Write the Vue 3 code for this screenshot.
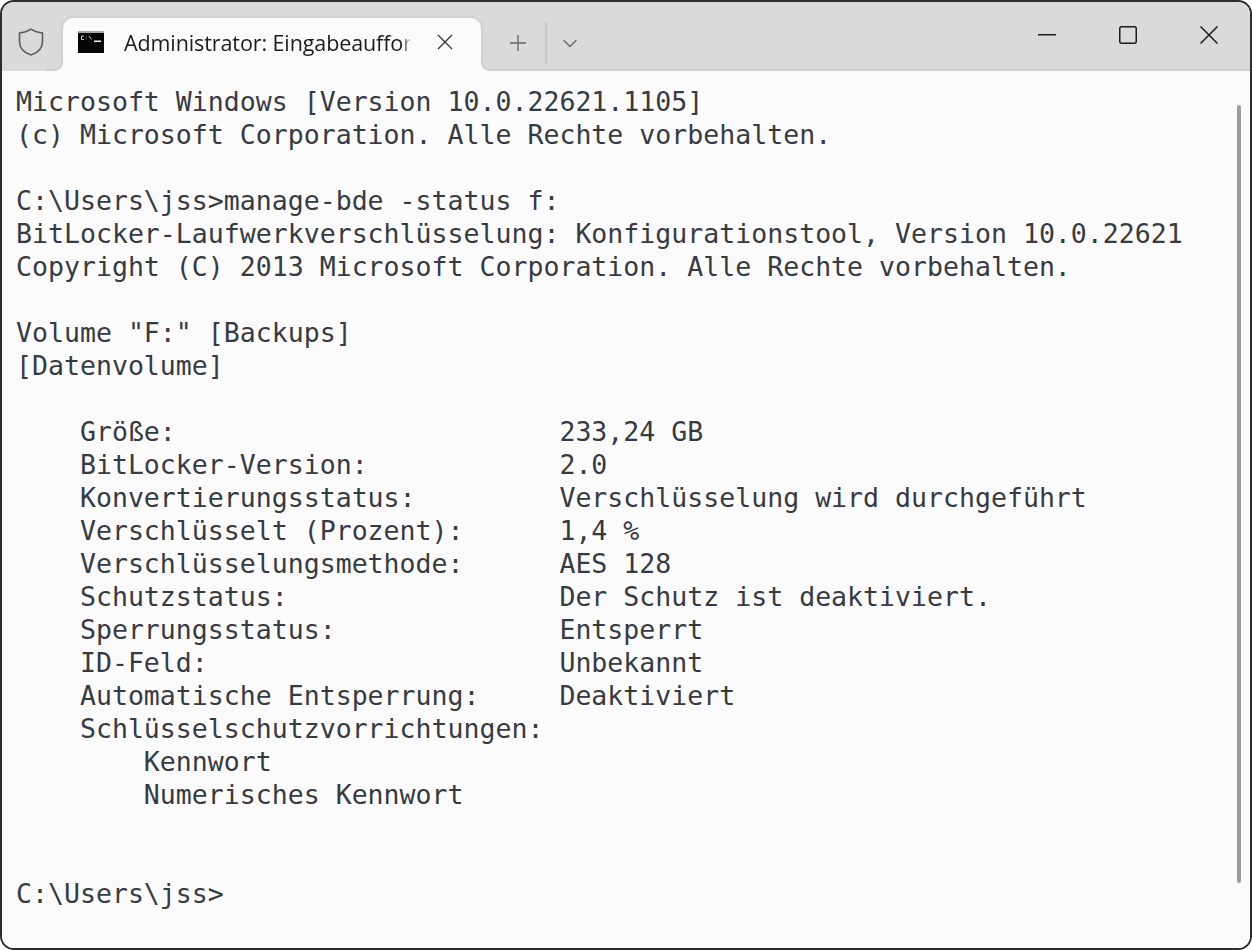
<script setup>
const lines = [
  'Microsoft Windows [Version 10.0.22621.1105]',
  '(c) Microsoft Corporation. Alle Rechte vorbehalten.',
  '',
  'C:\\Users\\jss>manage-bde -status f:',
  'BitLocker-Laufwerkverschlüsselung: Konfigurationstool, Version 10.0.22621',
  'Copyright (C) 2013 Microsoft Corporation. Alle Rechte vorbehalten.',
  '',
  'Volume "F:" [Backups]',
  '[Datenvolume]',
  '',
  '    Größe:                        233,24 GB',
  '    BitLocker-Version:            2.0',
  '    Konvertierungsstatus:         Verschlüsselung wird durchgeführt',
  '    Verschlüsselt (Prozent):      1,4 %',
  '    Verschlüsselungsmethode:      AES 128',
  '    Schutzstatus:                 Der Schutz ist deaktiviert.',
  '    Sperrungsstatus:              Entsperrt',
  '    ID-Feld:                      Unbekannt',
  '    Automatische Entsperrung:     Deaktiviert',
  '    Schlüsselschutzvorrichtungen:',
  '        Kennwort',
  '        Numerisches Kennwort',
  '',
  '',
  'C:\\Users\\jss>'
]
</script>

<template>
  <div class="window">
    <header class="titlebar">
      <div class="shield">
        <svg width="28" height="30" viewBox="0 0 28 30" fill="none">
          <path d="M14 2.2 C17.5 4.6 21 5.8 25.5 6 V14.5 C25.5 21 21 25.8 14 28 C7 25.8 2.5 21 2.5 14.5 V6 C7 5.8 10.5 4.6 14 2.2 Z" stroke="#5c5c5c" stroke-width="1.6" stroke-linejoin="round" />
        </svg>
      </div>
      <div class="tab">
        <svg class="cmd" width="26" height="22" viewBox="0 0 26 22">
          <rect x="0" y="0" width="26" height="22" fill="#050505" />
          <rect x="0" y="0" width="26" height="2" fill="#a8a8a8" />
          <path d="M6 5 H3.5 V8.5 H6 M8.5 5.5 V6 M8.5 7.5 V8 M11 5 L13.5 8.5" fill="none" stroke="#c8c8c8" stroke-width="1" />
          <rect x="16" y="9.5" width="7" height="1.5" fill="#efefef" />
        </svg>
        <span class="tab-title">Administrator: Eingabeaufforderung</span>
        <svg class="tab-close" width="16" height="16" viewBox="0 0 16 16">
          <path d="M1 1 L15 15 M15 1 L1 15" stroke="#333" stroke-width="1.2" />
        </svg>
      </div>
      <div class="tab-actions">
        <button class="plain plus">
          <svg width="18" height="18" viewBox="0 0 18 18"><path d="M9 1 V17 M1 9 H17" stroke="#666" stroke-width="1.3" /></svg>
        </button>
        <span class="divider"></span>
        <button class="plain chevron">
          <svg width="16" height="10" viewBox="0 0 16 10"><path d="M1.5 2 L8 8.5 L14.5 2" fill="none" stroke="#666" stroke-width="1.3" /></svg>
        </button>
      </div>
      <div class="controls">
        <button class="plain ctl">
          <svg width="18" height="18" viewBox="0 0 18 18"><path d="M0 8.75 H18" stroke="#1a1a1a" stroke-width="1.5" /></svg>
        </button>
        <button class="plain ctl">
          <svg width="18" height="18" viewBox="0 0 18 18"><rect x="0.75" y="0.75" width="16.5" height="16.5" rx="2" fill="none" stroke="#1a1a1a" stroke-width="1.5" /></svg>
        </button>
        <button class="plain ctl">
          <svg width="18" height="18" viewBox="0 0 18 18"><path d="M0.5 0.5 L17.5 17.5 M17.5 0.5 L0.5 17.5" stroke="#1a1a1a" stroke-width="1.5" /></svg>
        </button>
      </div>
    </header>
    <main class="console">
      <pre class="output"><template v-for="(l, i) in lines" :key="i">{{ l }}
</template></pre>
      <span class="scrollbar"></span>
    </main>
  </div>
</template>

<style>
html, body { margin: 0; background: #fff; }
</style>

<style scoped>
.window {
  width: 1252px;
  height: 950px;
  box-sizing: border-box;
  border: 2px solid #2c2c2c;
  border-radius: 14px;
  overflow: hidden;
  display: flex;
  flex-direction: column;
  background: #fbfbfb;
}
.titlebar {
  height: 69px;
  flex: none;
  box-sizing: border-box;
  background: #dadada;
  border-bottom: 2px solid #cdcdcd;
  display: flex;
  align-items: flex-end;
}
.shield {
  position: relative;
  width: 59px;
  height: 52px;
  flex: none;
  display: flex;
  align-items: center;
  justify-content: center;
  box-sizing: border-box;
  padding: 0 3px 3px 2px;
}
.shield::after {
  content: "";
  position: absolute;
  left: 0;
  bottom: -2px;
  width: 44px;
  height: 2px;
  background: #dadada;
}
.tab {
  position: relative;
  width: 422px;
  height: 55px;
  flex: none;
  box-sizing: border-box;
  margin-bottom: -2px;
  background: #fbfbfb;
  border-radius: 12px 12px 0 0;
  border: 2px solid #d2d2d2;
  border-bottom: 0;
  display: flex;
  align-items: center;
  padding: 0 0 5px 15px;
}
.tab::before,
.tab::after {
  content: "";
  position: absolute;
  bottom: 0;
  width: 8px;
  height: 8px;
}
.tab::before {
  left: -8px;
  background: radial-gradient(circle at 0 0, #dadada 6px, #cfcfcf 6.5px, #cfcfcf 7.5px, #fbfbfb 8px);
}
.tab::after {
  right: -8px;
  background: radial-gradient(circle at 100% 0, #dadada 6px, #cfcfcf 6.5px, #cfcfcf 7.5px, #fbfbfb 8px);
}
.cmd { flex: none; }
.tab-title {
  width: 287px;
  margin-left: 20px;
  flex: none;
  overflow: hidden;
  white-space: nowrap;
  font: 21.5px "Open Sans", "Noto Sans", sans-serif;
  letter-spacing: -0.1px;
  color: #1c1c1c;
  -webkit-mask-image: linear-gradient(to right, #000 97%, transparent);
}
.tab-close { margin-left: 26px; flex: none; }
.tab-actions {
  display: flex;
  align-items: center;
  height: 52px;
  box-sizing: border-box;
  flex: none;
}
.plain {
  border: 0;
  background: none;
  padding: 0;
  display: flex;
  align-items: center;
  justify-content: center;
}
.plus { width: 62px; height: 40px; padding-left: 7px; box-sizing: border-box; }
.divider { width: 2px; height: 42px; background: #c8c8c8; }
.chevron { width: 45px; height: 40px; }
.controls {
  margin-left: auto;
  margin-right: 1px;
  align-self: flex-start;
  display: flex;
  padding-top: 24px;
}
.ctl { width: 81px; height: 18px; }
.console {
  position: relative;
  flex: 1;
  min-height: 0;
  background: #fbfbfb;
}
.output {
  margin: 0;
  padding: 14px 0 0 14px;
  font: 26.55px/33px "DejaVu Sans Mono", monospace;
  color: #383a42;
  white-space: pre;
}
.scrollbar {
  position: absolute;
  right: 9px;
  top: 34px;
  bottom: 65px;
  width: 4px;
  border-radius: 2px;
  background: #9c9c9c;
}
</style>
